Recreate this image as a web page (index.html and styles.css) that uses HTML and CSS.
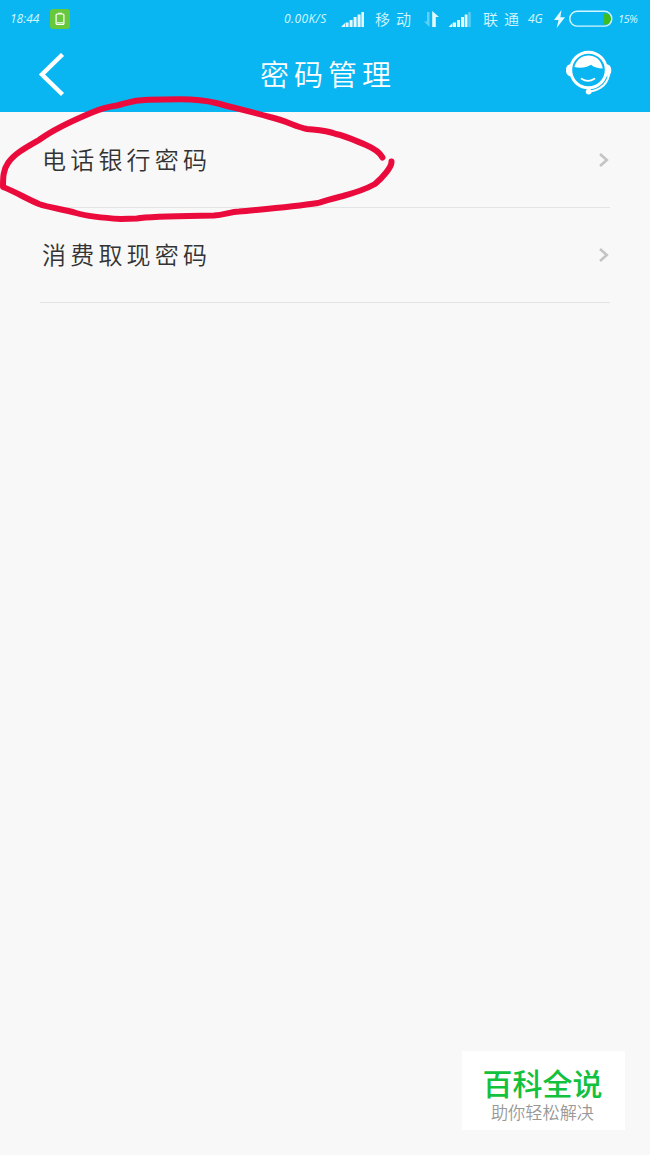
FILE: index.html
```html
<!DOCTYPE html>
<html lang="zh-CN">
<head>
    <meta charset="UTF-8">
    <meta name="viewport" content="width=device-width, initial-scale=1.0">
    <title>密码管理</title>
    <link rel="stylesheet" href="styles.css">
</head>
<body>
    <div class="header">
        <div class="status">
            <span class="latin time">18:44</span>
            <span class="app-icon">
                <svg width="20" height="20" viewBox="0 0 20 20">
                    <rect x="6.1" y="5" width="7.8" height="10.4" rx="1" fill="none" stroke="#fff" stroke-width="1.2"/>
                    <path d="M8 4.2h4M7 13.8h6" stroke="#fff" stroke-width="1.1"/>
                </svg>
            </span>
            <span class="latin speed">0.00K/S</span>
            <svg class="signal" width="24" height="18" viewBox="0 0 24 18">
                <path d="M0 17L4 13V17ZM4.6 12.5h3V17h-3ZM8.6 10h3V17h-3ZM12.6 7h3V17h-3ZM16.6 4.500h3v12.500h-3ZM20.400 2H23V17h-2.600Z"/>
            </svg>
            <span class="carrier">移动</span>
            <svg class="arrows" width="16" height="18" viewBox="0 0 16 18">
                <path d="M5.500 2v15L0 11.500h3V2Z" opacity=".4"/>
                <path d="M8.200 1L15 7h-3.200v10H8.200Z"/>
            </svg>
            <svg class="signal" width="24" height="18" viewBox="0 0 24 18">
                <path d="M-.5 17L3.500 13V17ZM4 12.500h3V17h-3ZM8 10h3V17h-3ZM12 7h3V17h-3ZM15.700 4.500h2.800v12.500h-2.800Z"/>
                <path d="M19.200 2h2.600V17h-2.600Z" opacity=".35"/>
            </svg>
            <span class="carrier">联通</span>
            <span class="latin net">4G</span>
            <svg class="bolt" width="12" height="18" viewBox="0 0 12 18">
                <path d="M7.500 0L0 10h4.500L2.700 18 11 7.300H6.400Z"/>
            </svg>
            <svg class="battery" width="44" height="18" viewBox="0 0 44 18">
                <path d="M34.500 3.500H37a5.500 5.500 0 0 1 0 11h-2.500Z" fill="#3dbd20"/>
                <rect x=".8" y="1.300" width="42" height="14.800" rx="7.400" fill="none" stroke="#d5f6ff" stroke-width="1.400"/>
            </svg>
            <span class="latin percent">15%</span>
        </div>
        <div class="navbar">
            <svg class="back" width="26" height="44" viewBox="0 0 26 44">
                <path d="M23.500 1.500L3 21.500L23.500 41.500" fill="none" stroke="#fff" stroke-width="4.400"/>
            </svg>
            <h1 class="title">密码管理</h1>
            <svg class="service" width="46" height="46" viewBox="0 0 46 46">
                <circle cx="22.500" cy="20" r="17.800" fill="none" stroke="#fff" stroke-width="3"/>
                <path d="M8.300 17C11 9 16 5.600 22.500 5.600S35 9.500 36.800 18.500C32 18.500 28 17.300 25 14.800C20.500 17.800 14 18.500 8.300 17Z" fill="#fff"/>
                <path d="M5.400 14C1.200 14.500 0 17 0 20.300S1.500 26.500 6 26.500ZM39.800 14C43.800 14.500 45.300 17 45.300 20.300S43.800 26 39.400 26.500Z" fill="#fff"/>
                <path d="M15.500 28.800Q22 33 28.500 28.800" fill="none" stroke="#fff" stroke-width="1.800" stroke-linecap="round"/>
                <path d="M43.400 21C43 33 35 40 23.500 41.500" fill="none" stroke="#fff" stroke-width="2.200"/>
                <circle cx="22.700" cy="41.600" r="2.900" fill="#fff"/>
            </svg>
        </div>
    </div>

    <div class="list">
        <div class="item">
            <span>电话银行密码</span>
            <svg width="12" height="16" viewBox="0 0 12 16">
                <path d="M2 2l6.800 6L2 14" fill="none" stroke="#c4c4c4" stroke-width="2.600"/>
            </svg>
        </div>
        <div class="item">
            <span>消费取现密码</span>
            <svg width="12" height="16" viewBox="0 0 12 16">
                <path d="M2 2l6.800 6L2 14" fill="none" stroke="#c4c4c4" stroke-width="2.600"/>
            </svg>
        </div>
    </div>

    <!-- hand drawn mark around the first row -->
    <svg class="mark" width="400" height="130" viewBox="0 95 400 130">
        <path d="M382.500 157.500C379 151 373 148 366 145C356 141 346 136 336 134C325 130 316 130 307 129C296 127 287 121 270 117C252 112 235 108 216 103C204 100 194 99.300 180 99.300L148 99.800C132 100 127 103 117 105.500C106 107 100 109 92 112.500C74 120 54 129 39 140C25 148 14 154 8 163C3 170 3 178 3 187C14 191 27 199 39 204C50 208 63 209 76 213C90 217 104 218 121 219L137 218.500C150 216 175 216 214 215.500C224 215 230 212 239 211.500C265 209 292 207 318 203C328 200 334 198 343 196C354 193 366 189 375 184C382 178 392 167 391.500 161.500"/>
    </svg>

    <div class="watermark">
        <div class="brand">百科全说</div>
        <div class="slogan">助你轻松解决</div>
    </div>
</body>
</html>
```
FILE: styles.css
```css
* {
    margin: 0;
    padding: 0;
    box-sizing: border-box;
}
body {
    position: relative;
    height: 1155px;
    background-color: #f8f8f8;
    font-family: "Noto Sans CJK SC", sans-serif;
    overflow: hidden;
}
svg {
    display: block;
    flex: none;
}
.header {
    height: 112px;
    background-color: #09b6f2;
    color: #fff;
}
.status {
    display: flex;
    align-items: center;
    height: 37px;
    padding-left: 10px;
    color: #d5f6ff;
    fill: #e2faff;
    white-space: nowrap;
}
.latin {
    flex: none;
    font-family: "Open Sans", sans-serif;
    font-weight: 400;
    font-style: italic;
    font-size: 12px;
    line-height: 18px;
}
.time {
    width: 40px;
}
.app-icon {
    width: 20px;
    height: 20px;
    border-radius: 3px;
    background-color: #68c83d;
}
.speed {
    width: 57px;
    margin-left: 214px;
    letter-spacing: 0.4px;
}
.carrier {
    width: 49px;
    margin-left: 10px;
    font-size: 15px;
    font-weight: 350;
    line-height: 18px;
    letter-spacing: 6px;
}
.arrows {
    margin-right: 9px;
}
.carrier + .net {
    width: 26px;
    margin-left: -4px;
}
.battery {
    margin-left: 3px;
}
.percent {
    margin-left: 5px;
    font-size: 11px;
    letter-spacing: -0.5px;
}
.navbar {
    display: flex;
    align-items: center;
    height: 75px;
    padding: 0 39px;
}
.title {
    margin-left: 195px;
    padding-bottom: 3px;
    font-size: 29px;
    font-weight: 350;
    line-height: 40px;
    letter-spacing: 5px;
}
.service {
    margin-left: auto;
    margin-right: -1px;
    margin-bottom: 3px;
}
.list {
    padding: 1px 40px 0;
}
.item {
    display: flex;
    align-items: center;
    justify-content: space-between;
    height: 95px;
    padding-left: 2px;
    border-bottom: 1px solid #e4e4e4;
    color: #333;
    font-size: 24px;
    font-weight: 350;
    letter-spacing: 4.2px;
}
.item span {
    padding-bottom: 4px;
}
.mark {
    position: absolute;
    top: 95px;
    left: 0;
    fill: none;
    stroke: #ea0a3c;
    stroke-width: 6px;
    stroke-linecap: round;
    stroke-linejoin: round;
}
.watermark {
    position: absolute;
    right: 25px;
    bottom: 25px;
    width: 163px;
    height: 79px;
    padding-top: 13px;
    background-color: #fff;
    text-align: center;
}
.brand {
    padding-right: 2px;
    color: #12c13c;
    font-size: 30px;
    font-weight: 500;
    line-height: 37px;
}
.slogan {
    padding-right: 2px;
    color: #999;
    font-size: 17.2px;
    font-weight: 350;
    line-height: 22px;
}
```
